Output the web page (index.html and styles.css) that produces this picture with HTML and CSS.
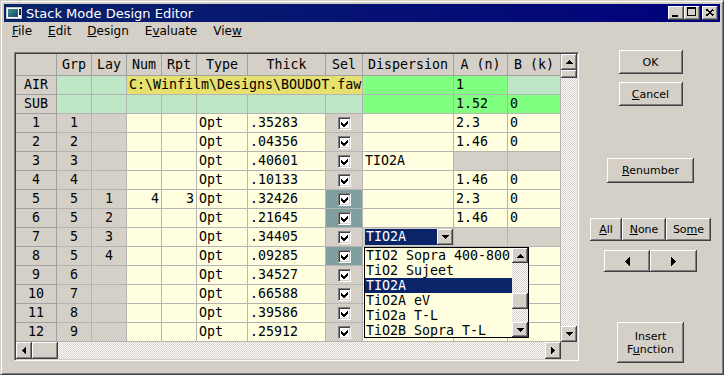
FILE: index.html
```html
<!DOCTYPE html>
<html lang="en">
<head>
    <meta charset="UTF-8">
    <title>Stack Mode Design Editor</title>
    <link rel="stylesheet" href="styles.css">
</head>
<body>

<div class="window">
    <div class="titlebar">
        <svg class="app-icon" width="16" height="12" viewBox="0 0 16 12">
            <defs>
                <linearGradient id="ig" x1="0" y1="0" x2="1" y2="1">
                    <stop offset="0" stop-color="#3a9a86"/>
                    <stop offset="1" stop-color="#1c3f7a"/>
                </linearGradient>
            </defs>
            <rect x="0" y="0" width="16" height="12" fill="#c8c8c8"/>
            <rect x="1" y="1" width="14" height="10" fill="#fff"/>
            <rect x="2" y="2" width="10" height="8" fill="url(#ig)"/>
            <rect x="13" y="2" width="2" height="6" fill="#202020"/>
        </svg>
        <span class="title">Stack Mode Design Editor</span>
        <div class="caption-btns">
            <button class="cap-btn"><svg width="16" height="14"><rect x="4" y="9" width="6" height="2"/></svg></button>
            <button class="cap-btn"><svg width="16" height="14"><path fill-rule="evenodd" d="M3 1h9v9H3z M4 3v6h7V3z"/></svg></button>
            <button class="cap-btn close"><svg width="16" height="14"><path d="M4.5 3.5l7 6M11.5 3.5l-7 6" stroke="#000" stroke-width="1.6"/></svg></button>
        </div>
    </div>

    <div class="menubar">
        <span class="menu-item"><u>F</u>ile</span>
        <span class="menu-item"><u>E</u>dit</span>
        <span class="menu-item"><u>D</u>esign</span>
        <span class="menu-item">E<u>v</u>aluate</span>
        <span class="menu-item">Vie<u>w</u></span>
    </div>

    <div class="client">
        <div class="grid-frame">
            <div class="grid-body">
                <div class="cells">
                    <!-- header -->
                    <div class="hd"></div><div class="hd">Grp</div><div class="hd">Lay</div><div class="hd">Num</div><div class="hd">Rpt</div><div class="hd">Type</div><div class="hd">Thick</div><div class="hd">Sel</div><div class="hd">Dispersion</div><div class="hd">A (n)</div><div class="hd">B (k)</div>

                    <!-- ambient and substrate -->
                    <div class="lbl">AIR</div><div class="lg"></div><div class="lg"></div><div class="yl">C:\Winfilm\Designs\BOUDOT.faw</div><div class="bg"></div><div class="bg">1</div><div class="lg"></div>
                    <div class="lbl">SUB</div><div class="lg"></div><div class="lg"></div><div class="lg"></div><div class="lg"></div><div class="lg"></div><div class="lg"></div><div class="lg"></div><div class="bg"></div><div class="bg">1.52</div><div class="bg">0</div>

                    <!-- layers -->
                    <div class="lbl">1</div><div class="g ctr">1</div><div class="g ctr"></div><div class="c rt"></div><div class="c rt"></div><div class="c">Opt</div><div class="c">.35283</div>
                    <div class="g sel"><svg class="chk" viewBox="0 0 11 11"><path d="M2 4L4 6H5L9 2V5L5 9H4L2 7z"/></svg></div><div class="c"></div><div class="c">2.3</div><div class="c">0</div>

                    <div class="lbl">2</div><div class="g ctr">2</div><div class="g ctr"></div><div class="c rt"></div><div class="c rt"></div><div class="c">Opt</div><div class="c">.04356</div>
                    <div class="g sel"><svg class="chk" viewBox="0 0 11 11"><path d="M2 4L4 6H5L9 2V5L5 9H4L2 7z"/></svg></div><div class="c"></div><div class="c">1.46</div><div class="c">0</div>

                    <div class="lbl">3</div><div class="g ctr">3</div><div class="g ctr"></div><div class="c rt"></div><div class="c rt"></div><div class="c">Opt</div><div class="c">.40601</div>
                    <div class="g sel"><svg class="chk" viewBox="0 0 11 11"><path d="M2 4L4 6H5L9 2V5L5 9H4L2 7z"/></svg></div><div class="c">TIO2A</div><div class="g"></div><div class="g"></div>

                    <div class="lbl">4</div><div class="g ctr">4</div><div class="g ctr"></div><div class="c rt"></div><div class="c rt"></div><div class="c">Opt</div><div class="c">.10133</div>
                    <div class="g sel"><svg class="chk" viewBox="0 0 11 11"><path d="M2 4L4 6H5L9 2V5L5 9H4L2 7z"/></svg></div><div class="c"></div><div class="c">1.46</div><div class="c">0</div>

                    <div class="lbl">5</div><div class="g ctr">5</div><div class="g ctr">1</div><div class="c rt">4</div><div class="c rt">3</div><div class="c">Opt</div><div class="c">.32426</div>
                    <div class="tl sel"><svg class="chk" viewBox="0 0 11 11"><path d="M2 4L4 6H5L9 2V5L5 9H4L2 7z"/></svg></div><div class="c"></div><div class="c">2.3</div><div class="c">0</div>

                    <div class="lbl">6</div><div class="g ctr">5</div><div class="g ctr">2</div><div class="c rt"></div><div class="c rt"></div><div class="c">Opt</div><div class="c">.21645</div>
                    <div class="tl sel"><svg class="chk" viewBox="0 0 11 11"><path d="M2 4L4 6H5L9 2V5L5 9H4L2 7z"/></svg></div><div class="c"></div><div class="c">1.46</div><div class="c">0</div>

                    <div class="lbl">7</div><div class="g ctr">5</div><div class="g ctr">3</div><div class="c rt"></div><div class="c rt"></div><div class="c">Opt</div><div class="c">.34405</div>
                    <div class="g sel"><svg class="chk" viewBox="0 0 11 11"><path d="M2 4L4 6H5L9 2V5L5 9H4L2 7z"/></svg></div>
                    <div class="g combo-cell">
                        <div class="combo">
                            <span class="combo-text">TIO2A</span>
                            <span class="sb-btn combo-btn"><svg width="7" height="4"><path d="M0 0h7v1H6v1H5v1H4v1H3V3H2V2H1V1H0z"/></svg></span>
                        </div>
                        <div class="droplist">
                            <div class="options">
                                <div class="opt">TIO2 Sopra 400-800</div>
                                <div class="opt">TiO2 Sujeet</div>
                                <div class="opt selected">TIO2A</div>
                                <div class="opt">TiO2A eV</div>
                                <div class="opt">TiO2a T-L</div>
                                <div class="opt">TiO2B Sopra T-L</div>
                            </div>
                            <div class="list-scroll">
                                <span class="sb-btn"><svg width="7" height="4"><path d="M3 0h1v1h1v1h1v1h1v1H0V3h1V2h1V1h1z"/></svg></span>
                                <span class="track short"></span>
                                <span class="sb-thumb list-thumb"></span>
                                <span class="track"></span>
                                <span class="sb-btn"><svg width="7" height="4"><path d="M0 0h7v1H6v1H5v1H4v1H3V3H2V2H1V1H0z"/></svg></span>
                            </div>
                        </div>
                    </div>
                    <div class="g"></div><div class="g"></div>

                    <div class="lbl">8</div><div class="g ctr">5</div><div class="g ctr">4</div><div class="c rt"></div><div class="c rt"></div><div class="c">Opt</div><div class="c">.09285</div>
                    <div class="tl sel"><svg class="chk" viewBox="0 0 11 11"><path d="M2 4L4 6H5L9 2V5L5 9H4L2 7z"/></svg></div><div class="c"></div><div class="c"></div><div class="c"></div>

                    <div class="lbl">9</div><div class="g ctr">6</div><div class="g ctr"></div><div class="c rt"></div><div class="c rt"></div><div class="c">Opt</div><div class="c">.34527</div>
                    <div class="g sel"><svg class="chk" viewBox="0 0 11 11"><path d="M2 4L4 6H5L9 2V5L5 9H4L2 7z"/></svg></div><div class="c"></div><div class="c"></div><div class="c"></div>

                    <div class="lbl">10</div><div class="g ctr">7</div><div class="g ctr"></div><div class="c rt"></div><div class="c rt"></div><div class="c">Opt</div><div class="c">.66588</div>
                    <div class="g sel"><svg class="chk" viewBox="0 0 11 11"><path d="M2 4L4 6H5L9 2V5L5 9H4L2 7z"/></svg></div><div class="c"></div><div class="c"></div><div class="c"></div>

                    <div class="lbl">11</div><div class="g ctr">8</div><div class="g ctr"></div><div class="c rt"></div><div class="c rt"></div><div class="c">Opt</div><div class="c">.39586</div>
                    <div class="g sel"><svg class="chk" viewBox="0 0 11 11"><path d="M2 4L4 6H5L9 2V5L5 9H4L2 7z"/></svg></div><div class="c"></div><div class="c"></div><div class="c"></div>

                    <div class="lbl">12</div><div class="g ctr">9</div><div class="g ctr"></div><div class="c rt"></div><div class="c rt"></div><div class="c">Opt</div><div class="c">.25912</div>
                    <div class="g sel"><svg class="chk" viewBox="0 0 11 11"><path d="M2 4L4 6H5L9 2V5L5 9H4L2 7z"/></svg></div><div class="c"></div><div class="c"></div><div class="c"></div>
                </div>

                <div class="vscroll">
                    <span class="sb-btn"><svg width="7" height="4"><path d="M3 0h1v1h1v1h1v1h1v1H0V3h1V2h1V1h1z"/></svg></span>
                    <span class="sb-thumb v-thumb"></span>
                    <span class="track"></span>
                    <span class="sb-btn"><svg width="7" height="4"><path d="M0 0h7v1H6v1H5v1H4v1H3V3H2V2H1V1H0z"/></svg></span>
                </div>
            </div>

            <div class="hscroll">
                <span class="sb-btn"><svg width="4" height="7"><path d="M3 0h1v7H3V6H2V5H1V4H0V3h1V2h1V1h1z"/></svg></span>
                <span class="sb-thumb h-thumb"></span>
                <span class="track"></span>
                <span class="sb-btn"><svg width="4" height="7"><path d="M0 0h1v1h1v1h1v1h1v1H3v1H2v1H1v1H0z"/></svg></span>
                <span class="corner"></span>
            </div>
        </div>

        <div class="side">
            <button class="btn ok-btn">OK</button>
            <button class="btn cancel-btn"><u>C</u>ancel</button>
            <button class="btn renumber-btn"><u>R</u>enumber</button>
            <div class="btn-row select-row">
                <button class="btn all-btn"><u>A</u>ll</button>
                <button class="btn none-btn"><u>N</u>one</button>
                <button class="btn some-btn">So<u>m</u>e</button>
            </div>
            <div class="btn-row nav-row">
                <button class="btn prev-btn"><svg width="5" height="9"><path d="M4 0h1v9H4V8H3V7H2V6H1V5H0V4h1V3h1V2h1V1h1z"/></svg></button>
                <button class="btn next-btn"><svg width="5" height="9"><path d="M0 0h1v1h1v1h1v1h1v1h1v1H4v1H3v1H2v1H1v1H0z"/></svg></button>
            </div>
            <button class="btn insert-btn">Insert<br>F<u>u</u>nction</button>
        </div>
    </div>
</div>

</body>
</html>
```

FILE: styles.css
```css
body {
    margin: 0;
    font-family: 'DejaVu Sans', sans-serif;
    background-color: #d4d0c8;
}

.window {
    width: 724px;
    height: 375px;
    box-sizing: border-box;
    display: flex;
    flex-direction: column;
    padding: 3px;
    background-color: #d4d0c8;
    border: 1px solid;
    border-color: #d4d0c8 #404040 #404040 #d4d0c8;
    box-shadow: inset 1px 1px #fff, inset -1px -1px #808080;
}

/* Title bar */
.titlebar {
    height: 18px;
    display: flex;
    align-items: center;
    background: linear-gradient(to right, #0a246a, #00007c);
    color: #fff;
}

.app-icon {
    margin-left: 2px;
}

.title {
    margin-left: 4px;
    font-size: 13px;
}

.caption-btns {
    display: flex;
    margin-left: auto;
    margin-right: 2px;
}

.cap-btn {
    width: 16px;
    height: 14px;
    padding: 0;
    border: none;
    background-color: #d4d0c8;
    box-shadow: inset -1px -1px #404040, inset 1px 1px #fff, inset -2px -2px #808080;
}

.cap-btn svg {
    display: block;
    shape-rendering: crispEdges;
}

.cap-btn.close {
    margin-left: 2px;
}

/* Menu */
.menubar {
    height: 19px;
    display: flex;
    font-size: 12px;
    line-height: 19px;
}

.menu-item {
    padding: 0 8px;
}

/* Main area */
.client {
    flex: 1;
    display: flex;
    padding-left: 10px;
}

.grid-frame {
    align-self: flex-start;
    margin-top: 11px;
    padding: 1px;
    border: 1px solid;
    border-color: #808080 #fff #fff #808080;
    box-shadow: inset 1px 1px #404040, inset -1px -1px #d4d0c8;
}

.grid-body {
    display: flex;
}

.cells {
    display: grid;
    grid-template-columns: 41px 35px 35px 35px 35px 51px 78px 37px 91px 54px 53px;
    grid-template-rows: 22px;
    grid-auto-rows: 19px;
    font-family: 'DejaVu Sans Mono', monospace;
    font-size: 13.3px;
    color: #000;
}

.cells > div {
    box-sizing: border-box;
    padding: 0 2px;
    line-height: 18px;
    white-space: nowrap;
    overflow: hidden;
    border-right: 1px solid #b4b4b4;
    border-bottom: 1px solid #b4b4b4;
}

.cells > .hd {
    background-color: #d4d0c8;
    text-align: center;
    line-height: 21px;
    border-color: #a0a0a0;
}

.cells > .lbl {
    background-color: #d4d0c8;
    text-align: center;
    border-color: #a0a0a0;
}

.g {
    background-color: #d4d0c8;
}

.c {
    background-color: #ffffe0;
}

.lg {
    background-color: #c0e6c8;
}

.bg {
    background-color: #80ff80;
}

.yl {
    grid-column: span 5;
    background-color: #e6e06e;
}

.tl {
    background-color: #80a0a0;
}

.ctr {
    text-align: center;
}

.rt {
    text-align: right;
}

.cells > .sel {
    display: flex;
    align-items: center;
    justify-content: center;
}

.chk {
    width: 13px;
    height: 13px;
    box-sizing: border-box;
    background-color: #fff;
    border: 1px solid;
    border-color: #808080 #fff #fff #808080;
    box-shadow: inset 1px 1px #404040, inset -1px -1px #d4d0c8;
    shape-rendering: crispEdges;
}

/* Combo box in the current row */
.cells > .combo-cell {
    position: relative;
    overflow: visible;
    padding: 0;
}

.combo {
    display: flex;
    height: 16px;
    margin: 1px 0 0 2px;
}

.combo-text {
    width: 72px;
    padding-left: 1px;
    line-height: 16px;
    background-color: #0a246a;
    color: #fff;
}

.combo-btn {
    width: 16px;
    height: 16px;
}

.droplist {
    position: absolute;
    top: 19px;
    left: 1px;
    z-index: 2;
    width: 165px;
    height: 91px;
    box-sizing: border-box;
    display: flex;
    border: 1px solid #000;
    background-color: #ffffe0;
}

.options {
    flex: 1;
}

.opt {
    height: 15px;
    line-height: 15px;
    padding-left: 1px;
}

.opt.selected {
    background-color: #0a246a;
    color: #fff;
}

.list-scroll {
    width: 16px;
    display: flex;
    flex-direction: column;
}

.list-scroll .sb-btn {
    height: 15px;
}

.track.short {
    flex: none;
    height: 30px;
}

.list-thumb {
    height: 8px;
}

/* Scroll bars */
.vscroll {
    width: 16px;
    display: flex;
    flex-direction: column;
}

.hscroll {
    height: 17px;
    display: flex;
}

.sb-btn,
.sb-thumb {
    flex: none;
    display: flex;
    align-items: center;
    justify-content: center;
    width: 16px;
    height: 16px;
    background-color: #d4d0c8;
    box-shadow: inset -1px -1px #404040, inset 1px 1px #fff, inset -2px -2px #808080;
}

.sb-btn svg {
    display: block;
}

.hscroll .sb-btn {
    height: 17px;
}

.v-thumb {
    height: 8px;
}

.h-thumb {
    width: 26px;
    height: 17px;
}

.track {
    flex: 1;
    background-color: #fff;
    background-image: repeating-conic-gradient(#d4d0c8 0 25%, #fff 0 50%);
    background-size: 2px 2px;
}

.corner {
    width: 16px;
    background-color: #d4d0c8;
}

/* Buttons on the right */
.side {
    flex: 1;
    display: flex;
    flex-direction: column;
    align-items: center;
    padding: 9px 0 0 2px;
}

.btn {
    padding: 0;
    border: none;
    font-family: 'DejaVu Sans', sans-serif;
    font-size: 11px;
    color: #000;
    background-color: #d4d0c8;
    box-shadow: inset -1px -1px #404040, inset 1px 1px #fff, inset -2px -2px #808080;
}

.btn svg {
    display: block;
    margin: 0 auto;
}

.ok-btn,
.cancel-btn {
    width: 64px;
    height: 24px;
}

.cancel-btn {
    margin-top: 8px;
}

.renumber-btn {
    width: 87px;
    height: 25px;
    margin-top: 52px;
}

.btn-row {
    display: flex;
}

.select-row {
    margin-top: 35px;
}

.select-row .btn {
    height: 23px;
}

.all-btn {
    width: 32px;
}

.none-btn {
    width: 44px;
}

.some-btn {
    width: 45px;
}

.nav-row {
    margin-top: 9px;
}

.prev-btn,
.next-btn {
    width: 46px;
    height: 22px;
}

.next-btn {
    width: 47px;
}

.insert-btn {
    width: 67px;
    height: 41px;
    margin-top: 50px;
    line-height: 13px;
}
```
